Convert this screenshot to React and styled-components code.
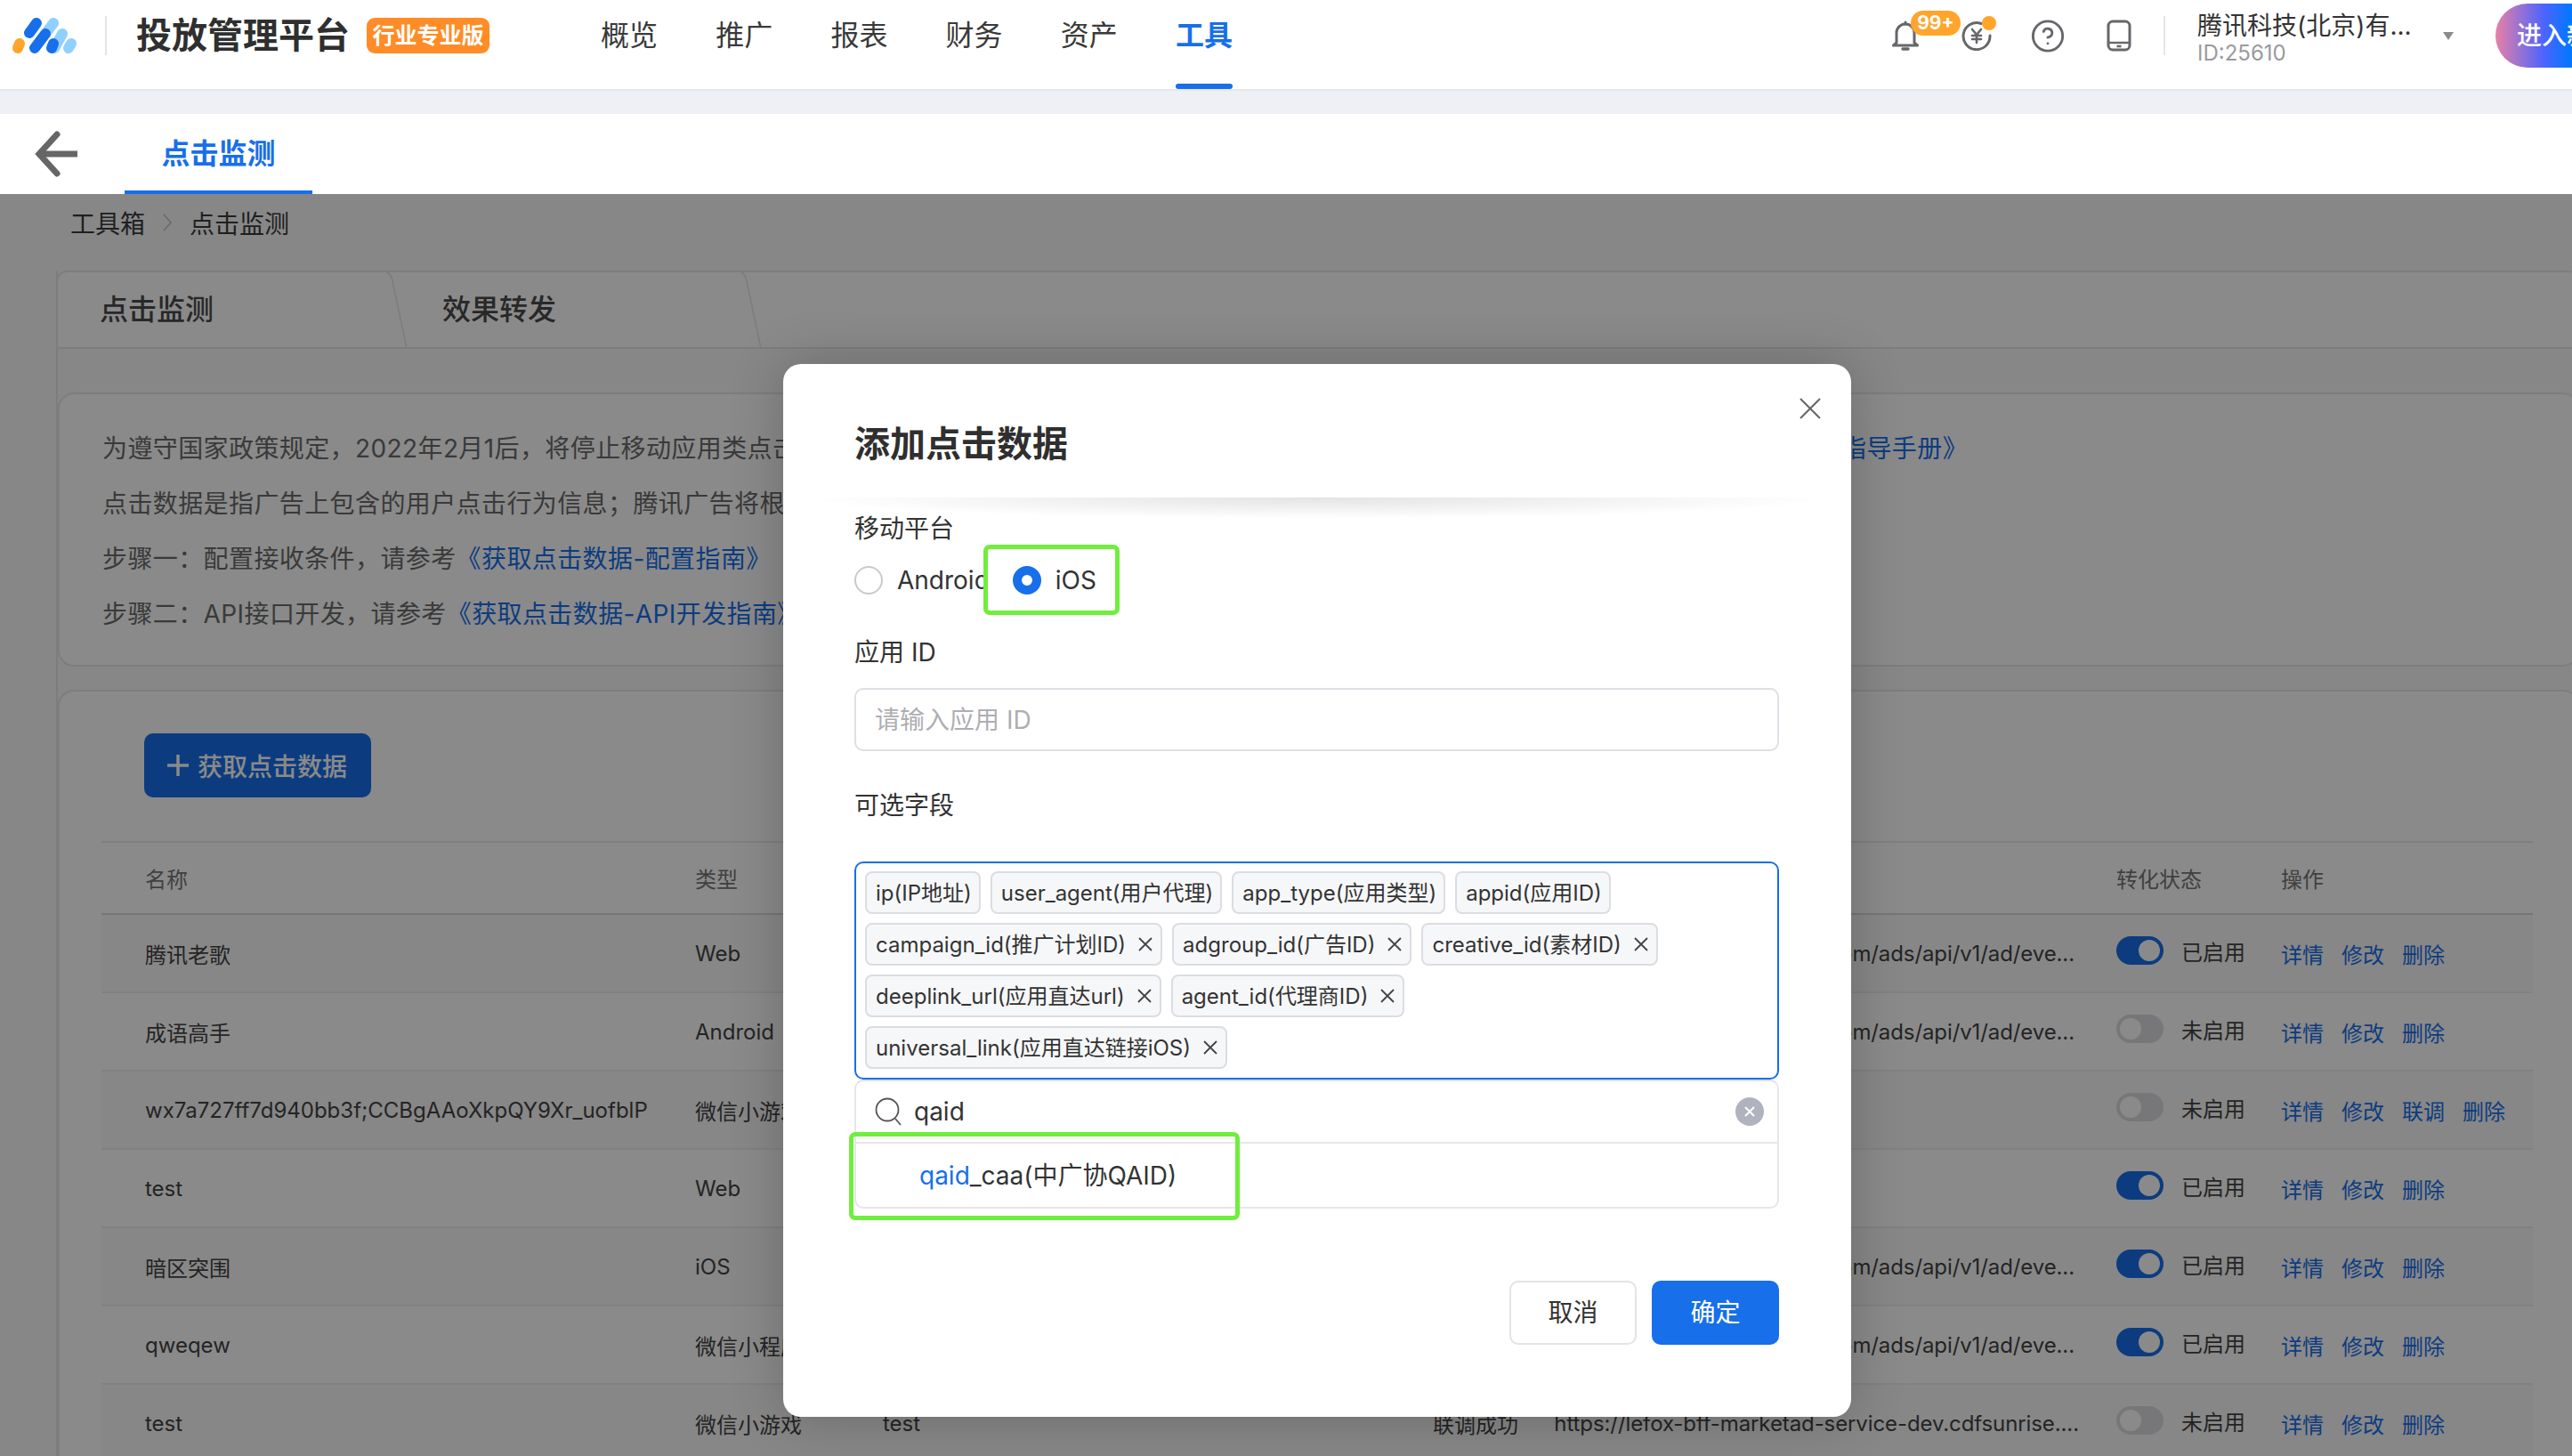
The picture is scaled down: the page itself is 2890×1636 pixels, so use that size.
import React from "react";
import styled, { createGlobalStyle } from "styled-components";
import { CircleHelp } from "lucide-react";

const GlobalStyle = createGlobalStyle`
  html, body {
    margin: 0;
    padding: 0;
    width: 2890px;
    height: 1636px;
    overflow: hidden;
    background: #f9fafc;
  }
  * {
    box-sizing: border-box;
  }
  body {
    font-family: Inter, "Noto Sans CJK SC", "Noto Sans", sans-serif;
    color: #333;
  }
`;

const Page = styled.div`
  position: relative;
  width: 2890px;
  height: 1636px;
  overflow: hidden;
`;

const TopBar = styled.header`
  display: flex;
  align-items: center;
  height: 102px;
  padding: 0 0 20px 10px;
  background: #fff;
  border-bottom: 2px solid #e6e7ec;
`;

const Logo = styled.svg`
  width: 80px;
  height: 48px;
  flex: none;
`;

const BarDivider = styled.span`
  width: 2px;
  height: 44px;
  flex: none;
  background: #e4e4e6;
  margin-left: ${(p) => p.$left}px;
`;

const Brand = styled.span`
  margin-left: 33px;
  font-size: 40px;
  line-height: 48px;
  font-weight: 700;
  color: #2f2f2f;
  white-space: nowrap;
`;

const Edition = styled.span`
  margin-left: 19px;
  width: 138px;
  height: 40px;
  border-radius: 9px;
  background: #ff8c26;
  color: #fff;
  font-size: 25px;
  line-height: 40px;
  font-weight: 700;
  text-align: center;
  white-space: nowrap;
`;

const Nav = styled.nav`
  display: flex;
  gap: 65.2px;
  margin-left: 125px;
`;

const NavItem = styled.span`
  position: relative;
  width: 64px;
  font-size: 32px;
  line-height: 40px;
  white-space: nowrap;
  color: ${(p) => (p.$active ? "#176fea" : "#3a3a3a")};
  font-weight: ${(p) => (p.$active ? 700 : 400)};
  &::after {
    content: "";
    display: ${(p) => (p.$active ? "block" : "none")};
    position: absolute;
    left: 0;
    right: 0;
    top: 74px;
    height: 6px;
    border-radius: 3px;
    background: #176fea;
  }
`;

const Tools = styled.div`
  display: flex;
  align-items: center;
  gap: 40px;
  margin-left: auto;
`;

const IconSlot = styled.span`
  position: relative;
  display: flex;
  align-items: center;
  justify-content: center;
  width: 40px;
  height: 40px;
  color: #66676b;
`;

const CountBadge = styled.span`
  position: absolute;
  left: 26px;
  top: -8px;
  width: 56px;
  height: 28px;
  border-radius: 14px;
  background: #ffa52b;
  color: #fff;
  font-size: 21px;
  line-height: 28px;
  font-weight: 700;
  text-align: center;
`;

const Dot = styled.span`
  position: absolute;
  left: 26px;
  top: -2px;
  width: 16px;
  height: 16px;
  border-radius: 50%;
  background: #ffa52b;
`;

const Account = styled.div`
  width: 276px;
  margin-left: 36px;
  padding-top: 6px;
`;

const AccountName = styled.div`
  font-size: 28px;
  line-height: 34px;
  color: #333;
  white-space: nowrap;
`;

const AccountId = styled.div`
  font-size: 24px;
  line-height: 28px;
  color: #9a9a9e;
`;

const Caret = styled.span`
  width: 0;
  height: 0;
  flex: none;
  border-left: 6.5px solid transparent;
  border-right: 6.5px solid transparent;
  border-top: 9px solid #8a8b8f;
`;

const NewVersion = styled.span`
  flex: none;
  width: 170px;
  height: 72px;
  margin: 0 -84px 0 47px;
  padding-left: 24px;
  border-radius: 36px;
  background: linear-gradient(90deg, #e880a6 0, #4c64ff 32%, #0078ff 50%);
  color: #fff;
  font-size: 28px;
  line-height: 72px;
  font-weight: 500;
  white-space: nowrap;
`;

const Band = styled.div`
  height: 26px;
  background: #eef0f5;
`;

const TabBar = styled.div`
  display: flex;
  height: 90px;
  background: #fff;
`;

const BackIcon = styled.svg`
  width: 52px;
  height: 52px;
  margin: 19px 0 0 37px;
  flex: none;
`;

const PageTab = styled.div`
  width: 211px;
  margin-left: 51px;
  border-bottom: 4px solid #176fea;
  color: #176fea;
  font-size: 32px;
  line-height: 90px;
  font-weight: 700;
  text-align: center;
`;

const Crumbs = styled.div`
  display: flex;
  align-items: center;
  gap: 19px;
  height: 40px;
  margin: 12px 0 0 79px;
  font-size: 28px;
  color: #3a3a3a;
`;

const Panel = styled.section`
  width: 2835px;
  margin: 34px 0 0 63px;
  border-left: 2px solid #e8e8ee;
`;

const PanelTabs = styled.div`
  display: flex;
  height: 88px;
  margin-left: -2px;
  background: #fff;
  border-top: 2px solid #e8e8ee;
  border-bottom: 2px solid #e8e8ee;
  border-left: 2px solid #e8e8ee;
  border-radius: 12px 12px 0 0;
  overflow: hidden;
`;

const PanelTab = styled.div`
  position: relative;
  width: ${(p) => p.$width}px;
  padding-left: 47px;
  font-size: 32px;
  line-height: 84px;
  font-weight: 500;
  color: #4a4a4a;
  &::after {
    content: "";
    position: absolute;
    right: 0;
    top: -4px;
    width: 40px;
    height: 100px;
    border-right: 2px solid #e8e8ee;
    border-top: 2px solid #e8e8ee;
    border-top-right-radius: 12px;
    transform: skewX(12deg);
  }
`;

const InfoCard = styled.div`
  margin-top: 49px;
  height: 308px;
  padding: 30px 0 0 48px;
  background: #fff;
  border: 2px solid #e8e8ee;
  border-radius: 18px;
`;

const InfoLine = styled.p`
  margin: 0;
  font-size: 28px;
  line-height: 62px;
  letter-spacing: 0.4px;
  color: #6b6b6b;
  white-space: pre;
`;

const Link = styled.span`
  color: #176fea;
`;

const TableCard = styled.div`
  margin-top: 26px;
  height: 900px;
  padding-top: 47px;
  background: #fff;
  border: 2px solid #e8e8ee;
  border-radius: 18px;
`;

const AddButton = styled.div`
  display: flex;
  align-items: center;
  gap: 10px;
  width: 255px;
  height: 72px;
  margin-left: 95px;
  padding-left: 26px;
  border-radius: 10px;
  background: #176fea;
  color: #fff;
  font-size: 28px;
  font-weight: 500;
`;

const Table = styled.div`
  width: 2732px;
  margin: 49px 0 0 47px;
  border-top: 2px solid #ebebef;
`;

const Row = styled.div`
  display: grid;
  grid-template-columns: 618px 211px 618px 136px 632px 185px 283px;
  align-items: center;
  height: ${(p) => (p.$head ? "81px" : "88px")};
  padding-left: 49px;
  font-size: 24px;
  white-space: nowrap;
  color: ${(p) => (p.$head ? "#777" : "#444")};
  background: ${(p) => (p.$shade ? "#f9f9fa" : "#fff")};
  border-bottom: 2px solid ${(p) => (p.$head ? "#dcdce4" : "#efeff2")};
`;

const UrlCell = styled.span`
  width: 590px;
  padding-right: ${(p) => (p.$short ? 5 : 0)}px;
  overflow: hidden;
  display: flex;
  justify-content: flex-end;
  letter-spacing: -0.1px;
`;

const StatusCell = styled.span`
  display: flex;
  align-items: center;
  gap: 20px;
  padding-bottom: 6px;
`;

const Toggle = styled.span`
  display: flex;
  justify-content: ${(p) => (p.$on ? "flex-end" : "flex-start")};
  width: 53px;
  height: 32px;
  padding: 4px;
  border-radius: 16px;
  background: ${(p) => (p.$on ? "#176fea" : "#dcdde2")};
  &::before {
    content: "";
    width: 24px;
    height: 24px;
    border-radius: 50%;
    background: #fff;
  }
`;

const Actions = styled.span`
  display: flex;
  gap: 20px;
  color: #176fea;
`;

const Mask = styled.div`
  position: absolute;
  left: 0;
  right: 0;
  top: 218px;
  bottom: 0;
  background: rgba(0, 0, 0, 0.46);
`;

const Dialog = styled.div`
  position: absolute;
  left: 880px;
  top: 409px;
  width: 1200px;
  height: 1183px;
  padding: 0 81px 0 80px;
  background: #fff;
  border-radius: 20px;
  box-shadow: 0 0 60px rgba(0, 0, 0, 0.22);
`;

const CloseIcon = styled.svg`
  position: absolute;
  right: 34px;
  top: 38px;
  width: 24px;
  height: 24px;
`;

const DialogHead = styled.div`
  position: relative;
  height: 150px;
  padding-top: 30px;
  margin: 0 -80px 0 -80px;
  padding-left: 80px;
  font-size: 40px;
  line-height: 120px;
  font-weight: 700;
  color: #2f2f2f;
  &::after {
    content: "";
    position: absolute;
    left: 20px;
    right: 20px;
    top: 150px;
    height: 24px;
    background: radial-gradient(ellipse 50% 100% at 50% 0, rgba(0, 0, 0, 0.11), rgba(0, 0, 0, 0) 100%);
  }
`;

const FieldLabel = styled.div`
  height: 40px;
  margin-top: ${(p) => p.$top}px;
  font-size: 28px;
  line-height: 40px;
  color: #333;
`;

const RadioGroup = styled.div`
  display: flex;
  align-items: center;
  height: 79px;
  margin-top: -2px;
`;

const RadioOption = styled.div`
  position: relative;
  flex: none;
  display: flex;
  align-items: center;
  gap: 16px;
  font-size: 28px;
  color: #333;
  ${(p) =>
    p.$marked &&
    `
    width: 153px;
    height: 79px;
    margin-left: -7px;
    padding-left: 28px;
    background: #fff;
    border: 5px solid #6fee3d;
    border-radius: 7px;
  `}
`;

const RadioDot = styled.span`
  flex: none;
  width: 32px;
  height: 32px;
  border-radius: 50%;
  background: #fff;
  border: ${(p) => (p.$checked ? "10px solid #176fea" : "2px solid #c8c9cf")};
`;

const TextBox = styled.div`
  height: 71px;
  margin-top: 20px;
  padding-left: 21px;
  border: 2px solid #dfdfe5;
  border-radius: 10px;
  font-size: 28px;
  line-height: 69px;
  color: #aeaeb2;
`;

const TagBox = styled.div`
  display: flex;
  flex-wrap: wrap;
  align-content: flex-start;
  gap: 10px 11px;
  height: 245px;
  margin-top: 43px;
  padding: 9px 10px;
  border: 2px solid #176fea;
  border-radius: 10px;
`;

const Tag = styled.span`
  display: flex;
  align-items: center;
  gap: 13px;
  height: 48px;
  padding: 0 8px 3px 10px;
  background: #f6f7f9;
  border: 2px solid #dcdde2;
  border-radius: 8px;
  font-size: 24px;
  color: #333;
  white-space: nowrap;
`;

const TagClose = styled.svg`
  width: 18px;
  height: 18px;
  flex: none;
  margin-top: 3px;
`;

const Dropdown = styled.div`
  position: relative;
  height: 145px;
  border: 2px solid #e6e6ea;
  border-top-color: #dfdfe5;
  border-radius: 10px;
`;

const SearchRow = styled.div`
  display: flex;
  align-items: center;
  gap: 14px;
  height: 70px;
  padding: 0 15px 0 21px;
  border-bottom: 2px solid #e6e6ea;
  font-size: 28px;
  color: #333;
`;

const SearchText = styled.span`
  flex: 1;
`;

const OptionRow = styled.div`
  height: 73px;
  padding-left: 71px;
  font-size: 28px;
  line-height: 73px;
  color: #333;
`;

const Match = styled.span`
  color: #176fea;
`;

const Callout = styled.div`
  position: absolute;
  left: -8px;
  top: 57px;
  width: 439px;
  height: 99px;
  border: 5px solid #6fee3d;
  border-radius: 7px;
`;

const DialogFoot = styled.div`
  display: flex;
  justify-content: flex-end;
  gap: 17px;
  margin-top: 81px;
`;

const DialogButton = styled.div`
  width: 143px;
  height: 72px;
  border-radius: 10px;
  font-size: 28px;
  line-height: ${(p) => (p.$primary ? "72px" : "68px")};
  text-align: center;
  color: ${(p) => (p.$primary ? "#fff" : "#333")};
  background: ${(p) => (p.$primary ? "#176fea" : "#fff")};
  border: ${(p) => (p.$primary ? "none" : "2px solid #e3e3e8")};
`;

const navItems = ["概览", "推广", "报表", "财务", "资产", "工具"];

const apiUrl = "https://api.e.qq.com/ads/api/v1/ad/eve...";

const rows = [
  { name: "腾讯老歌", type: "Web", desc: "", state: "联调成功", url: apiUrl, on: true },
  { name: "成语高手", type: "Android", desc: "", state: "联调成功", url: apiUrl, on: false },
  { name: "wx7a727ff7d940bb3f;CCBgAAoXkpQY9Xr_uofblP", type: "微信小游戏", desc: "", state: "", url: "", on: false, debug: true },
  { name: "test", type: "Web", desc: "", state: "", url: "", on: true },
  { name: "暗区突围", type: "iOS", desc: "", state: "联调成功", url: apiUrl, on: true },
  { name: "qweqew", type: "微信小程序", desc: "", state: "联调成功", url: apiUrl, on: true },
  { name: "test", type: "微信小游戏", desc: "test", state: "联调成功", url: "https://lefox-bff-marketad-service-dev.cdfsunrise....", on: false },
];

const fixedTags = ["ip(IP地址)", "user_agent(用户代理)", "app_type(应用类型)", "appid(应用ID)"];
const removableTags = [
  "campaign_id(推广计划ID)",
  "adgroup_id(广告ID)",
  "creative_id(素材ID)",
  "deeplink_url(应用直达url)",
  "agent_id(代理商ID)",
  "universal_link(应用直达链接iOS)",
];

const BrandLogo = () => (
  <Logo viewBox="10 16 80 48" fill="none" strokeWidth="12" strokeLinecap="round">
    <line x1="54" y1="34" x2="60" y2="26" stroke="#8fd0ff" />
    <line x1="61" y1="54" x2="70" y2="38" stroke="#8fd0ff" />
    <line x1="77" y1="54" x2="80" y2="49" stroke="#8fd0ff" />
    <line x1="20" y1="54" x2="22" y2="49" stroke="#ffa52b" />
    <line x1="33" y1="37" x2="41" y2="26" stroke="#176fea" />
    <line x1="39" y1="54" x2="51" y2="38" stroke="#176fea" />
    <line x1="58" y1="54" x2="60" y2="49" stroke="#176fea" />
  </Logo>
);

const BellIcon = () => (
  <svg width="34" height="34" viewBox="0 0 34 34" fill="none" stroke="currentColor" strokeWidth="3" strokeLinecap="round">
    <path d="M7 25V14a10 10 0 0 1 20 0v11l3.5 3H3.5z" strokeLinejoin="round" />
    <path d="M14 32h6" strokeWidth="3.5" />
    <path d="M17 2v2" />
  </svg>
);

const YuanIcon = () => (
  <svg width="34" height="34" viewBox="0 0 34 34" fill="none" stroke="currentColor" strokeWidth="3" strokeLinecap="round">
    <path d="M22 3.5A15 15 0 1 0 32 17" />
    <path d="M12 10l5 6 5-6M17 16v9M12 17h10M12 21h10" strokeWidth="2.6" />
  </svg>
);

const PhoneIcon = () => (
  <svg width="28" height="36" viewBox="0 0 28 36" fill="none" stroke="currentColor" strokeWidth="3">
    <rect x="2" y="2" width="24" height="32" rx="5" />
    <path d="M2 26h24" strokeWidth="2.4" />
    <path d="M11.5 30h5" strokeWidth="2.6" />
  </svg>
);

const CrossMark = ({ color = "#444" }) => (
  <TagClose viewBox="0 0 18 18" fill="none" stroke={color} strokeWidth="1.8">
    <path d="M2 2l14 14M16 2L2 16" />
  </TagClose>
);

const App = () => (
  <Page>
    <GlobalStyle />
    <TopBar>
      <BrandLogo />
      <BarDivider $left={28} />
      <Brand>投放管理平台</Brand>
      <Edition>行业专业版</Edition>
      <Nav>
        {navItems.map((item) => (
          <NavItem key={item} $active={item === "工具"}>
            {item}
          </NavItem>
        ))}
      </Nav>
      <Tools>
        <IconSlot>
          <BellIcon />
          <CountBadge>99+</CountBadge>
        </IconSlot>
        <IconSlot>
          <YuanIcon />
          <Dot />
        </IconSlot>
        <IconSlot>
          <CircleHelp size={43} strokeWidth={1.7} />
        </IconSlot>
        <IconSlot>
          <PhoneIcon />
        </IconSlot>
      </Tools>
      <BarDivider $left={30} />
      <Account>
        <AccountName>腾讯科技(北京)有...</AccountName>
        <AccountId>ID:25610</AccountId>
      </Account>
      <Caret />
      <NewVersion>进入新版</NewVersion>
    </TopBar>
    <Band />
    <TabBar>
      <BackIcon viewBox="0 0 52 52" fill="none" stroke="#666" strokeWidth="7">
        <path d="M50 26H8" />
        <path d="M27 4L7 26l20 22" strokeLinecap="round" />
      </BackIcon>
      <PageTab>点击监测</PageTab>
    </TabBar>
    <Crumbs>
      工具箱
      <svg width="12" height="20" viewBox="0 0 12 20" fill="none" stroke="#c4c4c8" strokeWidth="1.6">
        <path d="M2 1l8 9-8 9" />
      </svg>
      点击监测
    </Crumbs>
    <Panel>
      <PanelTabs>
        <PanelTab $width={385}>点击监测</PanelTab>
        <PanelTab $width={398}>效果转发</PanelTab>
      </PanelTabs>
      <InfoCard>
        <InfoLine>
          为遵守国家政策规定，2022年2月1后，将停止移动应用类点击数据的接收和转发服务，请广告主及时调整对接方案并完成数据校验，详情请参考 <Link>《点击监测指导手册》</Link>
        </InfoLine>
        <InfoLine>点击数据是指广告上包含的用户点击行为信息；腾讯广告将根据您配置的接收条件，把点击数据实时发送至您的服务器。</InfoLine>
        <InfoLine>
          步骤一：配置接收条件，请参考<Link>《获取点击数据-配置指南》</Link>
        </InfoLine>
        <InfoLine>
          步骤二：API接口开发，请参考<Link>《获取点击数据-API开发指南》</Link>
        </InfoLine>
      </InfoCard>
      <TableCard>
        <AddButton>
          <svg width="24" height="24" viewBox="0 0 24 24" stroke="#fff" strokeWidth="3.5">
            <path d="M12 0v24M0 12h24" />
          </svg>
          获取点击数据
        </AddButton>
        <Table>
          <Row $head>
            <span>名称</span>
            <span>类型</span>
            <span>描述</span>
            <span>联调状态</span>
            <span>回传地址</span>
            <span>转化状态</span>
            <span>操作</span>
          </Row>
          {rows.map((row, index) => (
            <Row key={index} $shade={index % 2 === 0}>
              <span>{row.name}</span>
              <span>{row.type}</span>
              <span>{row.desc}</span>
              <span>{row.state}</span>
              <UrlCell $short={row.url === apiUrl}>{row.url}</UrlCell>
              <StatusCell>
                <Toggle $on={row.on} />
                {row.on ? "已启用" : "未启用"}
              </StatusCell>
              <Actions>
                <span>详情</span>
                <span>修改</span>
                {row.debug && <span>联调</span>}
                <span>删除</span>
              </Actions>
            </Row>
          ))}
        </Table>
      </TableCard>
    </Panel>
    <Mask />
    <Dialog>
      <CloseIcon viewBox="0 0 24 24" fill="none" stroke="#666" strokeWidth="2">
        <path d="M1 1l22 22M23 1L1 23" />
      </CloseIcon>
      <DialogHead>添加点击数据</DialogHead>
      <FieldLabel $top={15}>移动平台</FieldLabel>
      <RadioGroup>
        <RadioOption>
          <RadioDot />
          Android
        </RadioOption>
        <RadioOption $marked>
          <RadioDot $checked />
          iOS
        </RadioOption>
      </RadioGroup>
      <FieldLabel $top={22}>应用 ID</FieldLabel>
      <TextBox>请输入应用 ID</TextBox>
      <FieldLabel $top={41}>可选字段</FieldLabel>
      <TagBox>
        {fixedTags.map((tag) => (
          <Tag key={tag}>{tag}</Tag>
        ))}
        {removableTags.map((tag) => (
          <Tag key={tag}>
            {tag}
            <CrossMark />
          </Tag>
        ))}
      </TagBox>
      <Dropdown>
        <SearchRow>
          <svg width="30" height="32" viewBox="0 0 30 32" fill="none" stroke="#555" strokeWidth="1.8">
            <circle cx="14" cy="14" r="12.5" />
            <path d="M23 24l6 7" />
          </svg>
          <SearchText>qaid</SearchText>
          <svg width="32" height="32" viewBox="0 0 32 32" fill="none">
            <circle cx="16" cy="16" r="16" fill="#b0b3bd" />
            <path d="M11 11l10 10M21 11L11 21" stroke="#fff" strokeWidth="2" />
          </svg>
        </SearchRow>
        <OptionRow>
          <Match>qaid</Match>_caa(中广协QAID)
        </OptionRow>
        <Callout />
      </Dropdown>
      <DialogFoot>
        <DialogButton>取消</DialogButton>
        <DialogButton $primary>确定</DialogButton>
      </DialogFoot>
    </Dialog>
  </Page>
);

export default App;
